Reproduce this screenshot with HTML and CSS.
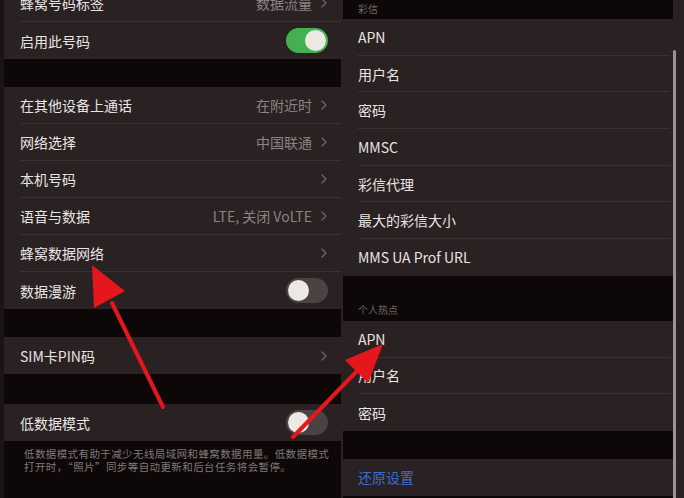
FILE: index.html
```html
<!DOCTYPE html>
<html lang="zh-CN">
<head>
<meta charset="utf-8">
<title>蜂窝网络设置</title>
<link rel="stylesheet" href="styles.css">
</head>
<body>
<div class="screen">
  <div class="pane left">
    <div class="group top">
      <div class="row"><div class="row-inner"><span class="label">蜂窝号码标签</span><span class="value">数据流量</span><svg class="chev" viewBox="0 0 6 10"><polyline points="1,1 5,5 1,9"/></svg></div></div>
      <div class="row"><div class="row-inner last"><span class="label">启用此号码</span><span class="toggle on"><span class="knob"></span></span></div></div>
    </div>
    <div class="gap"></div>
    <div class="group">
      <div class="row"><div class="row-inner"><span class="label">在其他设备上通话</span><span class="value">在附近时</span><svg class="chev" viewBox="0 0 6 10"><polyline points="1,1 5,5 1,9"/></svg></div></div>
      <div class="row"><div class="row-inner"><span class="label">网络选择</span><span class="value">中国联通</span><svg class="chev" viewBox="0 0 6 10"><polyline points="1,1 5,5 1,9"/></svg></div></div>
      <div class="row"><div class="row-inner"><span class="label">本机号码</span><svg class="chev" viewBox="0 0 6 10"><polyline points="1,1 5,5 1,9"/></svg></div></div>
      <div class="row"><div class="row-inner"><span class="label">语音与数据</span><span class="value">LTE, 关闭 VoLTE</span><svg class="chev" viewBox="0 0 6 10"><polyline points="1,1 5,5 1,9"/></svg></div></div>
      <div class="row"><div class="row-inner"><span class="label">蜂窝数据网络</span><svg class="chev" viewBox="0 0 6 10"><polyline points="1,1 5,5 1,9"/></svg></div></div>
      <div class="row"><div class="row-inner last"><span class="label">数据漫游</span><span class="toggle"><span class="knob"></span></span></div></div>
    </div>
    <div class="gap"></div>
    <div class="group">
      <div class="row"><div class="row-inner last"><span class="label">SIM卡PIN码</span><svg class="chev" viewBox="0 0 6 10"><polyline points="1,1 5,5 1,9"/></svg></div></div>
    </div>
    <div class="gap tall"></div>
    <div class="group">
      <div class="row"><div class="row-inner last"><span class="label">低数据模式</span><span class="toggle"><span class="knob"></span></span></div></div>
    </div>
    <p class="footer">低数据模式有助于减少无线局域网和蜂窝数据用量。低数据模式<br>打开时，“照片”同步等自动更新和后台任务将会暂停。</p>
  </div>

  <div class="pane right">
    <div class="content">
      <div class="section-head first">彩信</div>
      <div class="group">
        <div class="rrow"><div class="row-inner"><span class="label">APN</span></div></div>
        <div class="rrow"><div class="row-inner"><span class="label">用户名</span></div></div>
        <div class="rrow"><div class="row-inner"><span class="label">密码</span></div></div>
        <div class="rrow"><div class="row-inner"><span class="label">MMSC</span></div></div>
        <div class="rrow"><div class="row-inner"><span class="label">彩信代理</span></div></div>
        <div class="rrow"><div class="row-inner"><span class="label">最大的彩信大小</span></div></div>
        <div class="rrow"><div class="row-inner last"><span class="label">MMS UA Prof URL</span></div></div>
      </div>
      <div class="section-head hotspot">个人热点</div>
      <div class="group">
        <div class="rrow"><div class="row-inner"><span class="label">APN</span></div></div>
        <div class="rrow"><div class="row-inner"><span class="label">用户名</span></div></div>
        <div class="rrow"><div class="row-inner last"><span class="label">密码</span></div></div>
      </div>
      <div class="gap"></div>
      <div class="group">
        <div class="rrow"><div class="row-inner last"><span class="label link">还原设置</span></div></div>
      </div>
    </div>
    <div class="track"><div class="thumb"></div></div>
  </div>

  <svg class="arrows" viewBox="0 0 684 498" width="684" height="498">
    <line x1="163" y1="407" x2="112" y2="303" />
    <polygon points="92,265 125,291 94,308" />
    <line x1="293" y1="437" x2="360" y2="368" />
    <polygon points="383,344 368,383 345,360" />
  </svg>
</div>
</body>
</html>
```

FILE: styles.css
```css
* { box-sizing: border-box; }

html, body {
  margin: 0;
  padding: 0;
  background: #0e0707;
}

body {
  font-family: "Noto Sans CJK SC", "Noto Sans", sans-serif;
  color: #e8e4e4;
}

.screen {
  position: relative;
  width: 684px;
  height: 498px;
  overflow: hidden;
  display: flex;
  gap: 2px;
  padding-left: 4px;
  background: linear-gradient(to right, #1b1415 0, #1b1415 4px, #2a2122 4px);
}

.pane {
  background: #0e0707;
}

.left {
  width: 337px;
  flex: none;
}

.right {
  flex: 1;
  display: flex;
}

.content {
  width: 330px;
  flex: none;
}

.group {
  background: #2a2122;
}

.group.top {
  margin-top: -15px;
}

.gap {
  height: 28px;
  background: #0e0707;
}

.gap.tall {
  height: 30px;
}

.row {
  padding-left: 16px;
}

.rrow {
  padding-left: 15px;
}

.row-inner {
  height: 37px;
  display: flex;
  align-items: center;
  border-bottom: 1px solid #3a3132;
  padding-right: 14px;
}

.rrow .row-inner {
  height: 36.7px;
  margin-right: 3px;
}

.row-inner.last {
  border-bottom: none;
}

.label {
  font-size: 14px;
  line-height: 20px;
  flex: 1;
  white-space: nowrap;
}

.label.link {
  color: #3a6ed0;
}

.value {
  font-size: 14px;
  line-height: 20px;
  color: #8a8384;
  margin-right: 9px;
  white-space: nowrap;
}

.chev {
  width: 6px;
  height: 10px;
  flex: none;
}

.chev polyline {
  fill: none;
  stroke: #6e6768;
  stroke-width: 1.3;
  stroke-linecap: round;
  stroke-linejoin: round;
}

.toggle {
  width: 42px;
  height: 25px;
  border-radius: 13px;
  background: #4a4243;
  padding: 2px;
  display: flex;
  margin-right: -1px;
}

.toggle.on {
  background: #45b052;
  justify-content: flex-end;
}

.knob {
  width: 21px;
  height: 21px;
  border-radius: 50%;
  background: #ece8e3;
}

.footer {
  margin: 0;
  padding: 6px 6px 0 20px;
  font-size: 10.5px;
  line-height: 13px;
  letter-spacing: 0.4px;
  white-space: nowrap;
  color: #7f797a;
}

.section-head {
  font-size: 10px;
  color: #6d6768;
  padding-left: 15px;
  background: #0e0707;
}

.section-head.first {
  height: 19px;
  line-height: 17px;
}

.section-head.hotspot {
  height: 45px;
  padding-top: 27px;
  line-height: 14px;
}

.track {
  flex: 1;
  background: #2a2122;
  padding-top: 50px;
}

.thumb {
  width: 3px;
  height: 460px;
  border-radius: 2px;
  background: #9a9495;
}

.arrows {
  position: absolute;
  left: 0;
  top: 0;
  pointer-events: none;
}

.arrows line {
  stroke: #e5161c;
  stroke-width: 4;
  stroke-linecap: round;
}

.arrows polygon {
  fill: #e5161c;
}
```
